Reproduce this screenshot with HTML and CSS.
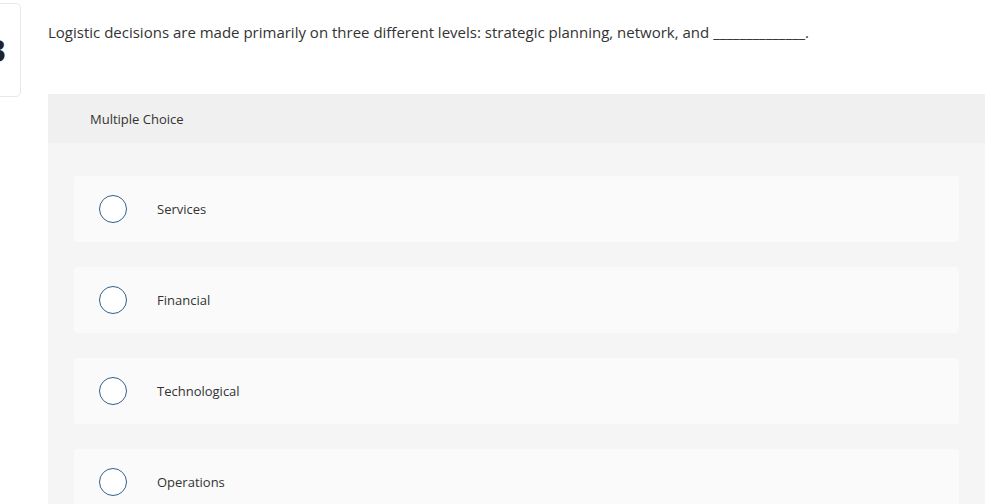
FILE: index.html
```html
<!DOCTYPE html>
<html lang="en">
<head>
<meta charset="utf-8">
<title>Multiple Choice Question</title>
<link rel="stylesheet" href="styles.css">
</head>
<body>
<div class="page">
  <div class="qnum"><span>3</span></div>
  <div class="main">
    <p class="prompt">Logistic decisions are made primarily on three different levels: strategic planning, network, and ______________.</p>
    <section class="panel">
      <header class="panel-head">Multiple Choice</header>
      <div class="choices">
        <label class="choice"><span class="radio"></span><span class="choice-text">Services</span></label>
        <label class="choice"><span class="radio"></span><span class="choice-text">Financial</span></label>
        <label class="choice"><span class="radio"></span><span class="choice-text">Technological</span></label>
        <label class="choice"><span class="radio"></span><span class="choice-text">Operations</span></label>
      </div>
    </section>
  </div>
</div>
</body>
</html>
```

FILE: styles.css
```css
html, body {
  margin: 0;
  padding: 0;
  background: #ffffff;
  overflow: hidden;
}

body {
  font-family: "Open Sans", "Lato", "Liberation Sans", sans-serif;
  color: #333333;
}

.page {
  display: flex;
  align-items: flex-start;
  gap: 27px;
}

.qnum {
  flex: 0 0 auto;
  width: 46px;
  height: 92px;
  margin-left: -27px;
  margin-top: 3px;
  border: 1px solid #e8e8e8;
  border-radius: 5px;
  display: flex;
  align-items: center;
  justify-content: center;
  font-size: 30px;
  font-weight: 700;
  color: #222222;
}

.main {
  flex: 1 1 auto;
  min-width: 0;
}

.prompt {
  margin: 22px 0 0;
  font-size: 15px;
  line-height: 20px;
  color: #333333;
}

.panel {
  margin-top: 52px;
}

.panel-head {
  height: 49px;
  background: #f0f0f0;
  padding-left: 42px;
  display: flex;
  align-items: center;
  font-size: 13px;
  color: #333333;
}

.choices {
  background: #f5f5f5;
  padding: 33px 26px 40px;
  display: flex;
  flex-direction: column;
  gap: 25px;
}

.choice {
  height: 66px;
  background: #fafafa;
  border-radius: 4px;
  display: flex;
  align-items: center;
  padding-left: 25px;
  gap: 30px;
  font-size: 13px;
  color: #333333;
}

.radio {
  width: 28px;
  height: 28px;
  box-sizing: border-box;
  border: 1.5px solid #30608f;
  border-radius: 50%;
  background: #ffffff;
  flex: 0 0 auto;
}
```
